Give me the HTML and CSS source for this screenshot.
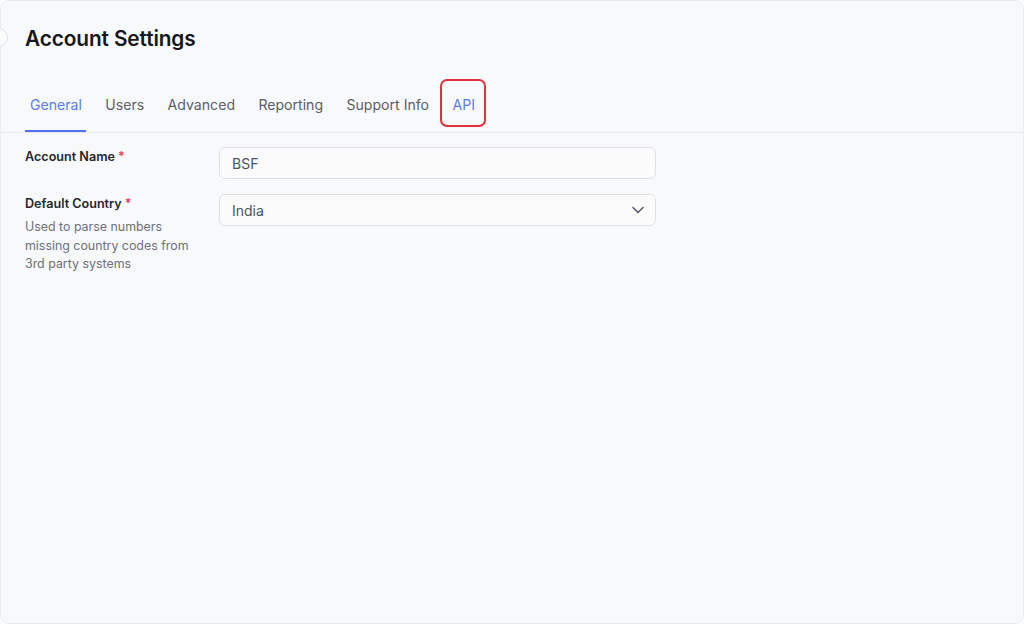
FILE: index.html
```html
<!DOCTYPE html>
<html lang="en">
<head>
<meta charset="utf-8">
<title>Account Settings</title>
<link rel="stylesheet" href="styles.css">
</head>
<body>
<div class="card">
  <span class="toggle"></span>
  <h1 class="title">Account Settings</h1>
  <nav class="tabs">
    <a class="tab active">General</a>
    <a class="tab">Users</a>
    <a class="tab">Advanced</a>
    <a class="tab">Reporting</a>
    <a class="tab">Support Info</a>
    <a class="tab api">API</a>
  </nav>
  <form class="form">
    <div class="row">
      <div class="label-col">
        <label class="label">Account Name <span class="req">*</span></label>
      </div>
      <div class="input">BSF</div>
    </div>
    <div class="row">
      <div class="label-col">
        <label class="label">Default Country <span class="req">*</span></label>
        <p class="help">Used to parse numbers missing country codes from 3rd party systems</p>
      </div>
      <div class="input select">
        <span>India</span>
        <svg class="chev" width="14" height="14" viewBox="0 0 14 14"><path d="M2 4.5 L7 9.5 L12 4.5" fill="none" stroke="#555b66" stroke-width="1.5" stroke-linecap="round" stroke-linejoin="round"/></svg>
      </div>
    </div>
  </form>
</div>
</body>
</html>
```
FILE: styles.css
```css
* { box-sizing: border-box; }
html, body { margin: 0; padding: 0; background: #ffffff; }
body {
  font-family: Inter, "DejaVu Sans", sans-serif;
  color: #1f2127;
  width: 1024px;
  height: 624px;
  overflow: hidden;
}
.card {
  position: relative;
  width: 1024px;
  height: 624px;
  background: #f8f9fb;
  border: 1px solid #ebebef;
  border-radius: 9px;
}
.toggle {
  position: absolute;
  left: -12px;
  top: 27px;
  width: 19px;
  height: 19px;
  border-radius: 50%;
  border: 1px solid #e2e3e8;
  background: #fbfbfc;
}
.title {
  margin: 0;
  padding: 25px 0 0 24px;
  font-size: 20.8px;
  font-weight: 600;
  line-height: 26px;
  letter-spacing: -0.1px;
  color: #17181c;
}
.tabs {
  display: flex;
  gap: 14.4px;
  margin-top: 31px;
  padding-left: 24px;
  border-bottom: 1px solid #e6e7eb;
}
.tab {
  display: block;
  padding: 12px 4px 15px 5px;
  font-size: 14.1px;
  line-height: 20px;
  color: #5a5e66;
  border-bottom: 2px solid transparent;
}
.tab.active {
  color: #5b7cf2;
  border-bottom-color: #4f70f0;
}
.api {
  color: #5b7cf2;
  position: relative;
}
.api::after {
  content: "";
  position: absolute;
  left: -7px;
  right: -7px;
  top: -4px;
  bottom: 3px;
  border: 2px solid #e3303e;
  border-radius: 7px;
}
.form {
  padding: 14px 0 0 24px;
}
.row {
  display: flex;
  margin-bottom: 15px;
}
.label-col {
  width: 194px;
  padding-top: 2px;
}
.label {
  display: block;
  font-size: 12.6px;
  font-weight: 600;
  line-height: 16px;
  color: #25272c;
}
.req { color: #e0404a; }
.help {
  margin: 6px 0 0;
  font-size: 12.4px;
  line-height: 18.5px;
  color: #6c707a;
  width: 180px;
}
.input {
  width: 437px;
  height: 32px;
  border: 1px solid #dfe1e6;
  border-radius: 6px;
  background: #fbfbfc;
  padding: 0 12px;
  display: flex;
  align-items: center;
  font-size: 14px;
  color: #4f535c;
}
.select { justify-content: space-between; }
.chev { margin-right: -2px; }
```
